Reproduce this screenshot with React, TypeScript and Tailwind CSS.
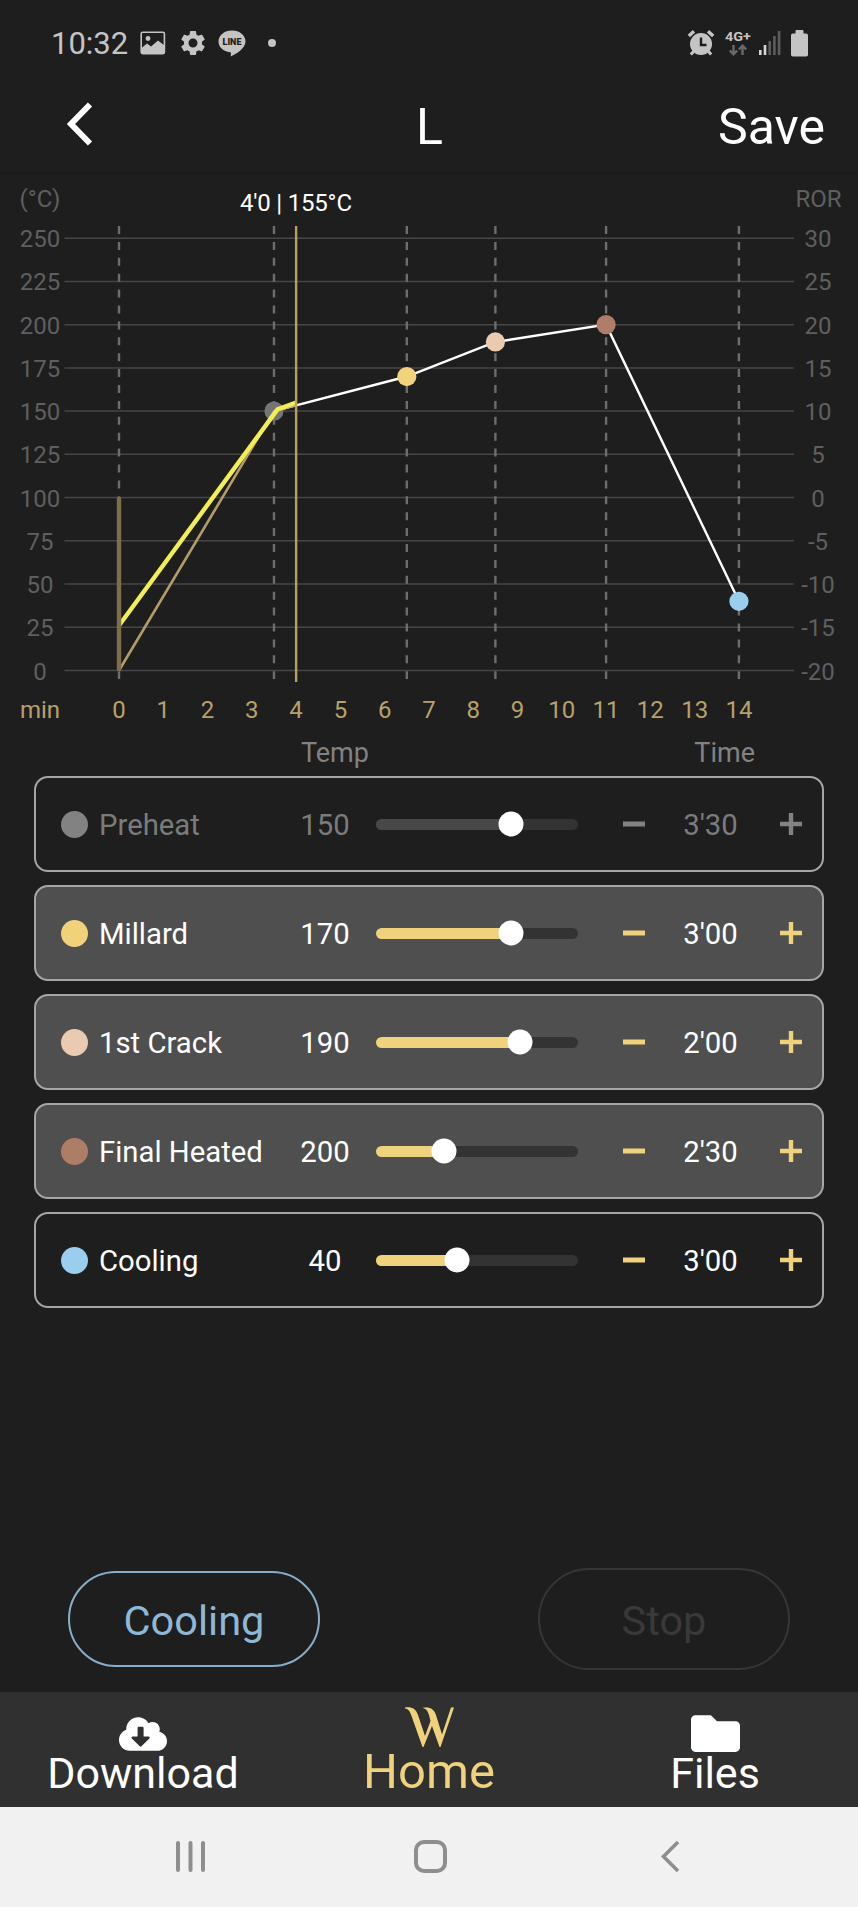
import { useState } from 'react';
import { FaCloudDownloadAlt, FaFolder } from 'react-icons/fa';
import { MdSettings } from 'react-icons/md';

interface Stage {
  id: number;
  name: string;
  temp: number;
  time: string;
  slider: number; // thumb position, 0 - 100
  dot: string;
  active: boolean;
  done: boolean;
}

const initialStages: Stage[] = [
  { id: 1, name: 'Preheat', temp: 150, time: "3'30", slider: 66.6, dot: 'bg-[#828282]', active: false, done: true },
  { id: 2, name: 'Millard', temp: 170, time: "3'00", slider: 66.6, dot: 'bg-[#f0d27b]', active: true, done: false },
  { id: 3, name: '1st Crack', temp: 190, time: "2'00", slider: 71.2, dot: 'bg-[#eacab1]', active: true, done: false },
  { id: 4, name: 'Final Heated', temp: 200, time: "2'30", slider: 33.5, dot: 'bg-[#ae7d66]', active: true, done: false },
  { id: 5, name: 'Cooling', temp: 40, time: "3'00", slider: 40.3, dot: 'bg-[#9bcdee]', active: false, done: false },
];

const points = [
  { min: 3.5, temp: 150, color: '#757577' },
  { min: 6.5, temp: 170, color: '#f3d27c' },
  { min: 8.5, temp: 190, color: '#eacab1' },
  { min: 11, temp: 200, color: '#b07d68' },
  { min: 14, temp: 40, color: '#9bcdee' },
];

const x = (min: number) => 119 + min * 44.28;
const y = (temp: number) => 496.5 - temp * 1.7292;

const StatusBar = () => (
  <div className="flex h-[86px] items-center pl-[51px] pr-[50px] text-[#c4c4c4]">
    <span className="text-[31px] leading-none">10:32</span>
    <svg className="ml-3 h-6 w-[26px]" viewBox="0 0 26 24" fill="none">
      <rect x="1.2" y="1.2" width="23.2" height="21.4" rx="1.5" stroke="currentColor" strokeWidth="1.6" />
      <circle cx="8" cy="7.5" r="2.4" fill="currentColor" />
      <path d="M1.5 17 L7 12.5 L11 15.5 L18 9.5 L24.5 14.5 V22.5 H1.5 Z" fill="currentColor" />
    </svg>
    <MdSettings className="ml-[12px] h-[30px] w-[30px]" />
    <svg className="ml-[10px] h-[27px] w-7" viewBox="0 0 28 27">
      <path d="M14 0.5 C6.3 0.5 0.5 5.3 0.5 11.5 C0.5 17.2 5.5 21.3 12 22.2 C13.3 22.5 13.2 23.4 12.6 26.5 C17.5 24.5 27.5 18.5 27.5 11.5 C27.5 5.3 21.7 0.5 14 0.5 Z" fill="currentColor" />
      <text x="14" y="15" fontSize="8.5" fontWeight="900" textAnchor="middle" textLength="19" lengthAdjust="spacingAndGlyphs" fill="#1e1e1e">LINE</text>
    </svg>
    <span className="ml-[22px] h-2 w-2 rounded-full bg-[#c4c4c4]" />

    <svg className="ml-auto h-7 w-7" viewBox="0 0 28 28" fill="none" stroke="currentColor">
      <circle cx="14" cy="15" r="11" fill="currentColor" stroke="none" />
      <path d="M1.8 7 L7 2.2 M26.2 7 L21 2.2" strokeWidth="3.4" />
      <path d="M7 22 L3.8 25.6 M21 22 L24.2 25.6" strokeWidth="3" />
      <path d="M14 8.5 V16 H19.5" stroke="#1e1e1e" strokeWidth="2.4" />
    </svg>
    <svg className="ml-[9px] h-[30px] w-7" viewBox="0 0 28 30">
      <text x="14" y="13" fontSize="13.5" fontWeight="700" textAnchor="middle" textLength="26" lengthAdjust="spacingAndGlyphs" fill="currentColor">4G+</text>
      <path d="M9.5 17 V26 M5.8 22.5 L9.5 26.3 L13.2 22.5 M18.5 27 V18 M14.8 21.5 L18.5 17.7 L22.2 21.5" stroke="#6a6a6a" strokeWidth="2.4" fill="none" />
    </svg>
    <svg className="ml-[7px] h-6 w-[22px]" viewBox="0 0 22 24">
      <rect x="0" y="19" width="2.6" height="5" fill="#d6d6d6" />
      <rect x="4.7" y="14" width="2.6" height="10" fill="#d6d6d6" />
      <rect x="9.4" y="10" width="2.6" height="14" fill="#5c5c5c" />
      <rect x="14.1" y="5" width="2.6" height="19" fill="#5c5c5c" />
      <rect x="18.8" y="0" width="2.6" height="24" fill="#5c5c5c" />
    </svg>
    <svg className="ml-[10px] h-[27px] w-[17px]" viewBox="0 0 17 27" fill="currentColor">
      <rect x="4.5" y="0" width="8" height="6" rx="1" />
      <rect x="0" y="3.5" width="17" height="23" rx="1.8" />
    </svg>
  </div>
);

const Header = () => (
  <header className="grid h-[88px] grid-cols-3 items-center border-b-2 border-[#1a1a1a] pb-[5px] pl-[66px] pr-[33px] text-[50px] leading-none text-white">
    <button className="pb-1.5">
      <svg className="h-11 w-7" viewBox="0 0 28 44" fill="none" stroke="currentColor" strokeWidth="6">
        <path d="M24 2.5 L5 22 L24 41.5" />
      </svg>
    </button>
    <h1 className="-ml-8 text-center">L</h1>
    <button className="text-right">Save</button>
  </header>
);

const Chart = () => (
  <svg className="block h-[554px] w-full" viewBox="0 0 858 554" fontSize="24" textAnchor="middle">
    <text x="40" y="32.5" fill="#5f5f5f">(°C)</text>
    <text x="818.5" y="32.5" fill="#5f5f5f">ROR</text>

    {Array.from({ length: 11 }, (_, i) => (
      <g key={i} fill="#5f5f5f">
        <line x1="64.5" x2="794" y1={y(i * 25)} y2={y(i * 25)} stroke="#464646" strokeWidth="1.5" />
        <text x="40" y={y(i * 25) + 9}>{i * 25}</text>
        <text x="818" y={y(i * 25) + 9}>{i * 5 - 20}</text>
      </g>
    ))}

    {[0, ...points.map((p) => p.min)].map((min) => (
      <line key={min} x1={x(min)} x2={x(min)} y1="52" y2="505" stroke="#6d6d6d" strokeWidth="2.4" strokeDasharray="8 7.9" />
    ))}

    {/* target profile */}
    <polyline points={points.map((p) => `${x(p.min)},${y(p.temp)}`).join(' ')} fill="none" stroke="#fff" strokeWidth="2.4" />
    {points.map((p) => (
      <circle key={p.min} cx={x(p.min)} cy={y(p.temp)} r="9.6" fill={p.color} />
    ))}

    {/* roasted so far */}
    <polyline points={`${x(0)},${y(0)} ${x(3.5)},${y(150)} ${x(4)},${y(153.5)}`} fill="none" stroke="#b39c68" strokeWidth="2.6" />
    <polyline points={`${x(0)},${y(26)} ${x(3.58)},${y(151)} ${x(4)},${y(155)}`} fill="none" stroke="#f1ee56" strokeWidth="4.4" />
    <line x1={x(0)} x2={x(0)} y1={y(100)} y2={y(0)} stroke="#7d6e4d" strokeWidth="4.4" />
    <line x1={x(4)} x2={x(4)} y1="52" y2="508" stroke="#b8a064" strokeWidth="2.4" />
    <text x="296" y="37" fill="#fff" textLength="112">4'0 | 155°C</text>

    <g fill="#b8a16c">
      <text x="40" y="543.5">min</text>
      {Array.from({ length: 15 }, (_, i) => (
        <text key={i} x={x(i)} y="543.5">{i}</text>
      ))}
    </g>
  </svg>
);

interface StageRowProps {
  stage: Stage;
}

const StageRow = ({ stage }: StageRowProps) => {
  const textColor = stage.done ? 'text-[#7b7b7b]' : 'text-white';
  const iconColor = stage.done ? 'text-[#828282]' : 'text-[#efd27b]';

  return (
    <li
      className={`flex h-24 items-center rounded-[14px] border-2 border-[#a6a6a6] pl-[25px] text-[29.3px] leading-none ${
        stage.active ? 'bg-[#4f4f4f]' : 'bg-[#1e1e1e]'
      }`}
    >
      <span className={`h-[27px] w-[27px] shrink-0 rounded-full ${stage.dot}`} />
      <span className={`ml-[11px] w-[187px] whitespace-nowrap pt-[3px] ${textColor}`}>{stage.name}</span>
      <span className={`w-[78px] pt-[3px] text-center ${textColor}`}>{stage.temp}</span>
      <div className="relative ml-[12px] h-[11px] w-[202px] rounded-full bg-[#333]">
        <div
          className={`h-full rounded-full ${stage.done ? 'bg-[#484848]' : 'bg-[#f0d27c]'}`}
          style={{ width: `${stage.slider}%` }}
        />
        <span
          className="absolute top-1/2 h-[25px] w-[25px] -translate-x-1/2 -translate-y-1/2 rounded-full bg-white"
          style={{ left: `${stage.slider}%` }}
        />
      </div>
      <button className={`ml-[45px] ${iconColor}`}>
        <svg className="h-[22px] w-[22px]" viewBox="0 0 22 22" stroke="currentColor" strokeWidth="5">
          <path d="M0 11 H22" />
        </svg>
      </button>
      <span className={`w-[135px] pt-[3px] pr-1 text-center ${textColor}`}>{stage.time}</span>
      <button className={iconColor}>
        <svg className="h-[22px] w-[22px]" viewBox="0 0 22 22" stroke="currentColor" strokeWidth="4.4">
          <path d="M0 11 H22 M11 0 V22" />
        </svg>
      </button>
    </li>
  );
};

const TabBar = () => (
  <nav className="grid h-[115px] grid-cols-3 bg-[#303030] text-[43px] leading-none text-white">
    <a className="flex flex-col items-center pt-[18px]">
      <FaCloudDownloadAlt className="h-[48px] w-[48px]" />
      <span className="-mt-[6px]">Download</span>
    </a>
    <a className="flex flex-col items-center pt-[15px] text-[#f0d27c]">
      <svg className="h-10 w-[49px]" viewBox="0 0 49 40" fill="currentColor">
        <path d="M0 .5 C7 -.5 11 2 13 8 L20 29 L25.5 14 L24 8 C22.5 3.5 21 2 17.5 .8 C25 -.5 29 2 31 8 L37 27.5 L46 .5 H49 L35.5 40 H34.5 L27 19 L18.5 40 H17.5 L6.5 9 C5 4 3.5 2 0 1.4 Z" />
      </svg>
      <span className="text-[49px] leading-none">Home</span>
    </a>
    <a className="flex flex-col items-center pt-[17px]">
      <FaFolder className="h-[49px] w-[49px]" />
      <span className="-mt-[6px]">Files</span>
    </a>
  </nav>
);

const SystemNav = () => (
  <div className="flex h-[100px] items-start bg-[#f1f1f1] pl-[175px] pt-[33px] text-[#8e8e8e]">
    <svg className="h-8 w-8" viewBox="0 0 32 32" stroke="currentColor" strokeWidth="4" strokeLinecap="round">
      <path d="M3 3 V30 M15.5 3 V30 M28 3 V30" />
    </svg>
    <span className="ml-[207px] h-[33px] w-[33px] rounded-[10px] border-4 border-[#8e8e8e]" />
    <svg className="ml-[212px] h-8 w-6" viewBox="0 0 24 32" fill="none" stroke="currentColor" strokeWidth="3.6">
      <path d="M19 2 L4.5 16.5 L19 31" />
    </svg>
  </div>
);

const App: React.FC = () => {
  const [stages] = useState<Stage[]>(initialStages);

  return (
    <div className="flex h-[1907px] w-[858px] flex-col overflow-hidden bg-[#1e1e1e] font-['Roboto',sans-serif]">
      <StatusBar />
      <Header />
      <Chart />
      <div className="flex h-12 items-center pl-[301px] pr-[103px] pt-[3px] text-[27px] leading-none text-[#828282]">
        <span>Temp</span>
        <span className="ml-auto">Time</span>
      </div>
      <ul className="flex flex-col gap-[13px] px-[34px]">
        {stages.map((stage) => (
          <StageRow key={stage.id} stage={stage} />
        ))}
      </ul>
      <div className="mt-auto mb-[22px] flex items-center justify-between px-[68px] text-[41.5px] leading-none">
        <button className="h-24 w-[252px] rounded-full border-2 border-[#86aecb] pt-[3px] text-[#8fb8d6]">Cooling</button>
        <button className="h-[102px] w-[252px] rounded-full border-2 border-[#363636] pt-[3px] text-[#393939]">Stop</button>
      </div>
      <TabBar />
      <SystemNav />
    </div>
  );
};

export default App;
